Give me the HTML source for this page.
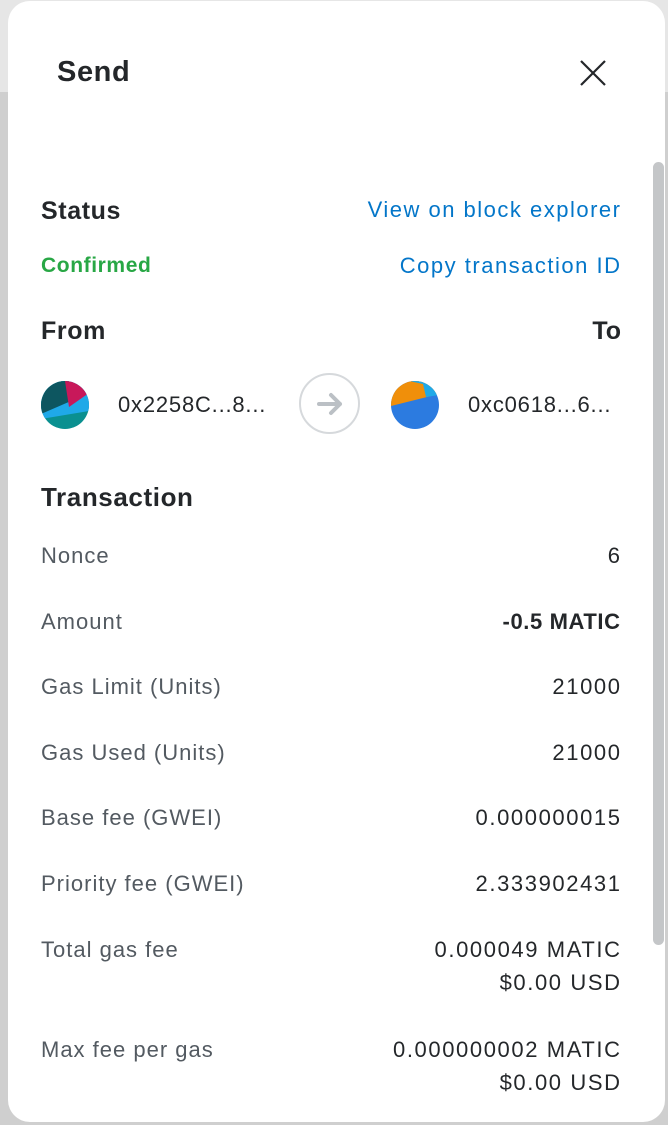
<!DOCTYPE html>
<html><head><style>
body{margin:0;width:668px;height:1125px;background:#cfcfcf;font-family:"Liberation Sans",sans-serif;overflow:hidden;position:relative}
.top{position:absolute;left:0;top:0;width:668px;height:92px;background:#e6e6e6}
.card{position:absolute;left:8px;top:1px;width:657px;height:1121px;background:#fff;border-radius:22px}
.t{position:absolute;white-space:nowrap}
.b{font-weight:bold;color:#24272a;letter-spacing:0.6px}
.lab{left:41px;font-size:22px;color:#535a61;letter-spacing:1px}
.val{right:48px;font-size:22px;color:#24272a;text-align:right;line-height:33px;letter-spacing:1.6px;margin-right:-1.6px}
.link{right:48px;font-size:22px;color:#0376c9;letter-spacing:1.5px;margin-right:-1.5px}
.thumb{position:absolute;left:653px;top:162px;width:11px;height:783px;background:#c4c6c8;border-radius:6px}
</style></head><body>
<div class="top"></div>
<div class="card"></div>
<div class="thumb"></div>
<div class="t b" style="left:57px;top:56px;font-size:29px;letter-spacing:0.6px">Send</div>
<svg style="position:absolute;left:580px;top:60px" width="26" height="26" viewBox="0 0 26 26"><path d="M1 1L25 25M25 1L1 25" stroke="#24272a" stroke-width="2.2" fill="none"/></svg>
<div class="t b" style="left:41px;top:197px;font-size:25px">Status</div>
<div class="t link" style="top:197px">View on block explorer</div>
<div class="t" style="left:41px;top:254px;font-size:21px;font-weight:bold;color:#28a745;letter-spacing:0.6px">Confirmed</div>
<div class="t link" style="top:253px">Copy transaction ID</div>
<div class="t b" style="left:41px;top:317px;font-size:25px">From</div>
<div class="t b" style="right:47px;top:317px;font-size:25px;letter-spacing:0">To</div>
<svg style="position:absolute;left:41px;top:381px" width="48" height="48" viewBox="0 0 48 48"><defs><clipPath id="c1"><circle cx="24" cy="24" r="24"/></clipPath></defs><g clip-path="url(#c1)"><rect width="48" height="48" fill="#0a9090"/><polygon points="0,0 48,0 48,30 0,38" fill="#1fa9e8"/><polygon points="0,0 28,0 30,20 0,33" fill="#0d5660"/><polygon points="24,0 48,0 48,12 28,26" fill="#c8185a"/></g></svg>
<div class="t" style="left:118px;top:392px;font-size:22px;color:#24272a;letter-spacing:0.8px">0x2258C...8...</div>
<div style="position:absolute;left:299px;top:373px;width:61px;height:61px;border:2px solid #d6d9dc;border-radius:50%;box-sizing:border-box"></div>
<svg style="position:absolute;left:316px;top:390px" width="28" height="28" viewBox="0 0 28 28"><path d="M3 14H24M15 5L24 14L15 23" stroke="#bbc0c5" stroke-width="4" stroke-linecap="round" stroke-linejoin="round" fill="none"/></svg>
<svg style="position:absolute;left:391px;top:381px" width="48" height="48" viewBox="0 0 48 48"><defs><clipPath id="c2"><circle cx="24" cy="24" r="24"/></clipPath></defs><g clip-path="url(#c2)"><rect width="48" height="48" fill="#2c7be0"/><polygon points="0,0 48,0 48,13 0,25" fill="#f08f0a"/><polygon points="18,0 48,0 48,14 35,16 32,3" fill="#1fa9e8"/></g></svg>
<div class="t" style="left:468px;top:392px;font-size:22px;color:#24272a;letter-spacing:0.8px">0xc0618...6...</div>
<div class="t b" style="left:41px;top:482px;font-size:26px">Transaction</div>
<div class="t lab" style="top:543px">Nonce</div><div class="t val" style="top:539px">6</div>
<div class="t lab" style="top:609px">Amount</div><div class="t val" style="top:605px;font-weight:bold;letter-spacing:0.6px;margin-right:-0.6px">-0.5 MATIC</div>
<div class="t lab" style="top:674px">Gas Limit (Units)</div><div class="t val" style="top:670px">21000</div>
<div class="t lab" style="top:740px">Gas Used (Units)</div><div class="t val" style="top:736px">21000</div>
<div class="t lab" style="top:805px">Base fee (GWEI)</div><div class="t val" style="top:801px">0.000000015</div>
<div class="t lab" style="top:871px">Priority fee (GWEI)</div><div class="t val" style="top:867px">2.333902431</div>
<div class="t lab" style="top:937px">Total gas fee</div><div class="t val" style="top:933px">0.000049 MATIC<br>$0.00 USD</div>
<div class="t lab" style="top:1037px">Max fee per gas</div><div class="t val" style="top:1033px">0.000000002 MATIC<br>$0.00 USD</div>
</body></html>
